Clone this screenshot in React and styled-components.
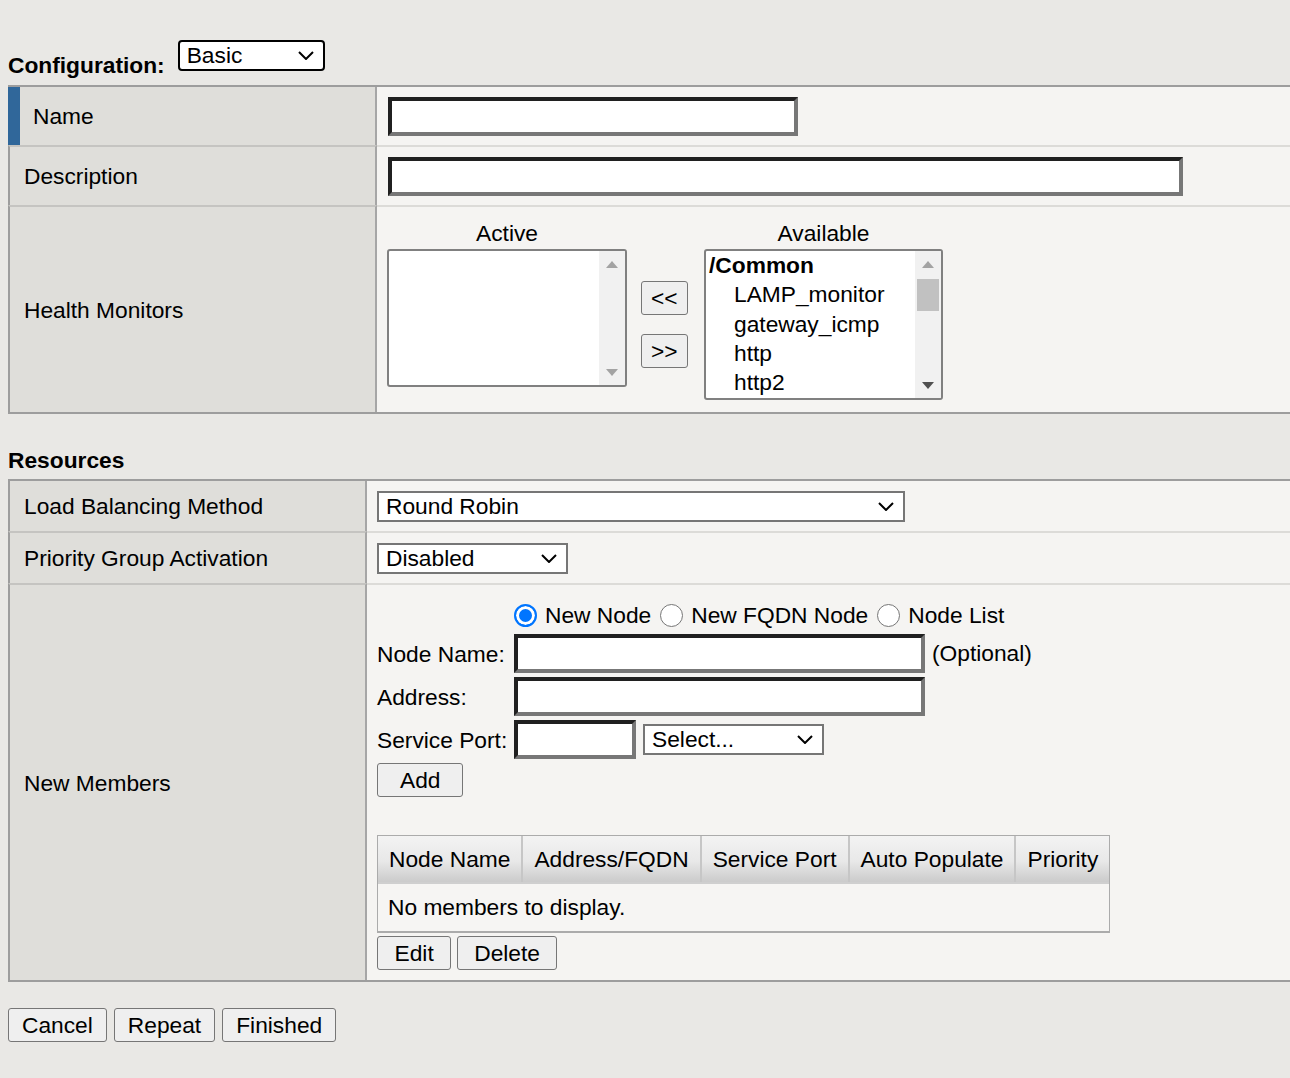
import styled, { createGlobalStyle } from "styled-components"

const GlobalStyle = createGlobalStyle`
  html, body {
    margin: 0;
    padding: 0;
  }
  body {
    background: #e9e8e5;
    font-family: "Liberation Sans", Arial, sans-serif;
    font-size: 22.75px;
    color: #000;
    overflow: hidden;
  }
  * {
    box-sizing: border-box;
  }
`

const Page = styled.div`
  width: 1290px;
  padding-left: 8px;
  overflow: hidden;
`

const ConfigBar = styled.div`
  display: flex;
  align-items: flex-start;
  gap: 13px;
  height: 45px;
  margin-top: 40px;
`

const BoldLabel = styled.div`
  font-weight: bold;
  line-height: 26px;
  padding-top: ${(p) => p.$top || 0}px;
`

const SectionTitle = styled(BoldLabel)`
  padding: 33px 0 6px;
`

const SelectBox = styled.div`
  width: ${(p) => p.$w}px;
  height: 31px;
  display: flex;
  align-items: center;
  justify-content: space-between;
  padding: 0 9px 0 7px;
  background: #fff;
  border: 2px solid ${(p) => (p.$dark ? "#000" : "#767676")};
  border-radius: ${(p) => (p.$dark ? 4 : 0)}px;
  line-height: 1;
  white-space: nowrap;
`

const LabelCell = styled.div`
  display: flex;
  align-items: center;
  background: #dfdeda;
  border-left: ${(p) => (p.$required ? "12px solid #30679a" : "2px solid #9d9d9d")};
  border-right: 2px solid #a6a6a6;
  padding-left: ${(p) => (p.$required ? 13 : 14)}px;
  line-height: 26px;
`

const ValueCell = styled.div`
  display: flex;
  flex-direction: ${(p) => (p.$column ? "column" : "row")};
  align-items: ${(p) => (p.$column || p.$top ? "flex-start" : "center")};
  background: #f5f4f2;
  padding: ${(p) => p.$pad || "0 0 0 10px"};
`

const Row = styled.div`
  display: grid;
  grid-template-columns: ${(p) => p.$label}px 1fr;
  min-height: ${(p) => p.$h || 0}px;
`

const PropTable = styled.div`
  width: calc(100% + 20px);
  border-top: 2px solid #9d9d9d;
  border-bottom: 2px solid #9d9d9d;

  & > ${Row} + ${Row} > ${LabelCell} {
    border-top: 2px solid #c5c4c1;
  }
  & > ${Row} + ${Row} > ${ValueCell} {
    border-top: 2px solid #dcdbd8;
  }
`

const Field = styled.input`
  display: block;
  width: ${(p) => p.$w}px;
  height: 39px;
  margin-left: ${(p) => p.$ml || 0}px;
  padding: 0 4px;
  border: 4px solid;
  border-color: #202020 #777 #777 #202020;
  background: #fff;
  font: inherit;
  outline: none;
`

const DualList = styled.div`
  display: grid;
  grid-template-columns: 240px 49px 239px;
  grid-template-rows: 26px auto;
  column-gap: 14px;
  row-gap: 3px;
`

const ListHeader = styled.div`
  text-align: center;
  line-height: 26px;
`

const ListBox = styled.div`
  height: ${(p) => p.$h}px;
  display: flex;
  align-self: start;
  background: #fff;
  border: 2px solid #808080;
  border-radius: 3px;
  overflow: hidden;
`

const ListItems = styled.div`
  flex: 1;
  padding: 0 3px;
  line-height: 29.3px;
  white-space: nowrap;
`

const ListItem = styled.div`
  padding-left: ${(p) => (p.$group ? 0 : 25)}px;
  font-weight: ${(p) => (p.$group ? "bold" : "normal")};
`

const ScrollTrack = styled.div`
  width: 26px;
  display: flex;
  flex-direction: column;
  background: #f1f1f1;
`

const ScrollButton = styled.div`
  height: 26px;
  display: flex;
  align-items: center;
  justify-content: center;
`

const ScrollThumb = styled.div`
  height: 32px;
  margin: 2px 2px 0;
  background: #c1c1c1;
`

const Spacer = styled.div`
  flex: 1;
`

const Mover = styled.div`
  display: flex;
  flex-direction: column;
  gap: 19px;
  align-self: center;
  justify-self: start;
`

const Button = styled.button`
  height: 34px;
  padding: 0 ${(p) => p.$px || 13}px;
  border: 1px solid #767676;
  border-radius: 3px;
  background: #efefef;
  color: #000;
  font: inherit;
  line-height: 1;
  white-space: nowrap;
`

const MemberForm = styled.div`
  display: grid;
  grid-template-columns: 135px auto;
  column-gap: 2px;
  row-gap: 4px;
  align-items: center;
  justify-content: start;
`

const FormLabel = styled.div`
  line-height: 26px;
  white-space: nowrap;
`

const RadioGroup = styled.div`
  grid-column: 2;
  display: flex;
  align-items: center;
  height: 30px;
`

const RadioOption = styled.label`
  display: inline-flex;
  align-items: center;
  gap: 8px;
  margin-right: 9px;
  line-height: 26px;
  white-space: nowrap;
`

const Radio = styled.span`
  width: 23px;
  height: 23px;
  border-radius: 50%;
  flex: none;
  background: ${(p) => (p.$on ? "#0075ff" : "#fff")};
  border: ${(p) => (p.$on ? "2px solid #0075ff" : "1.5px solid #767676")};
  box-shadow: ${(p) => (p.$on ? "inset 0 0 0 3px #fff" : "none")};
`

const InlineRow = styled.div`
  display: flex;
  align-items: center;
  gap: 7px;
`

const AddSlot = styled.div`
  grid-column: 1;
`

const MembersTable = styled.table`
  margin-top: 38px;
  border-collapse: separate;
  border-spacing: 0;
  border: solid #ababab;
  border-width: 1px 1px 2px 1px;
`

const Th = styled.th`
  height: 46px;
  padding: 0 11px;
  font-weight: normal;
  text-align: left;
  white-space: nowrap;
  background: linear-gradient(to bottom, #f3f3f3 0%, #e8e8e8 55%, #cbcbcb 100%);

  & + & {
    border-left: 2px solid #c6c6c6;
  }
`

const Td = styled.td`
  height: 49px;
  padding: 0 10px;
  border-top: 2px solid #cfcfcf;
  background: #f6f5f3;
`

const ButtonRow = styled.div`
  display: flex;
  gap: ${(p) => p.$gap || 6}px;
  margin-top: ${(p) => p.$mt || 0}px;
`

function Chevron() {
  return (
    <svg width="16" height="9" viewBox="0 0 16 9">
      <polyline points="1,1 8,8 15,1" fill="none" stroke="#000" strokeWidth="2" />
    </svg>
  )
}

function Arrow({ down, color }) {
  return (
    <svg width="12" height="7" viewBox="0 0 12 7">
      <polygon points={down ? "0,0 12,0 6,7" : "0,7 12,7 6,0"} fill={color} />
    </svg>
  )
}

function Select({ value, width, dark }) {
  return (
    <SelectBox $w={width} $dark={dark}>
      <span>{value}</span>
      <Chevron />
    </SelectBox>
  )
}

const monitors = ["LAMP_monitor", "gateway_icmp", "http", "http2"]
const columns = ["Node Name", "Address/FQDN", "Service Port", "Auto Populate", "Priority"]

export default function App() {
  return (
    <Page>
      <GlobalStyle />
      <ConfigBar>
        <BoldLabel $top={12}>Configuration:</BoldLabel>
        <Select value="Basic" width={147} dark />
      </ConfigBar>

      <PropTable>
        <Row $label={369} $h={58}>
          <LabelCell $required>Name</LabelCell>
          <ValueCell>
            <Field $w={410} $ml={1} />
          </ValueCell>
        </Row>
        <Row $label={369} $h={60}>
          <LabelCell>Description</LabelCell>
          <ValueCell>
            <Field $w={795} $ml={1} />
          </ValueCell>
        </Row>
        <Row $label={369}>
          <LabelCell>Health Monitors</LabelCell>
          <ValueCell $top $pad="13px 0 12px 10px">
            <DualList>
              <ListHeader>Active</ListHeader>
              <div />
              <ListHeader>Available</ListHeader>
              <ListBox $h={138}>
                <ListItems />
                <ScrollTrack>
                  <ScrollButton>
                    <Arrow color="#a3a3a3" />
                  </ScrollButton>
                  <Spacer />
                  <ScrollButton>
                    <Arrow down color="#a3a3a3" />
                  </ScrollButton>
                </ScrollTrack>
              </ListBox>
              <Mover>
                <Button $px={9}>&lt;&lt;</Button>
                <Button $px={9}>&gt;&gt;</Button>
              </Mover>
              <ListBox $h={151}>
                <ListItems>
                  <ListItem $group>/Common</ListItem>
                  {monitors.map((m) => (
                    <ListItem key={m}>{m}</ListItem>
                  ))}
                </ListItems>
                <ScrollTrack>
                  <ScrollButton>
                    <Arrow color="#a3a3a3" />
                  </ScrollButton>
                  <ScrollThumb />
                  <Spacer />
                  <ScrollButton>
                    <Arrow down color="#505050" />
                  </ScrollButton>
                </ScrollTrack>
              </ListBox>
            </DualList>
          </ValueCell>
        </Row>
      </PropTable>

      <SectionTitle>Resources</SectionTitle>

      <PropTable>
        <Row $label={359} $h={50}>
          <LabelCell>Load Balancing Method</LabelCell>
          <ValueCell>
            <Select value="Round Robin" width={528} />
          </ValueCell>
        </Row>
        <Row $label={359} $h={52}>
          <LabelCell>Priority Group Activation</LabelCell>
          <ValueCell>
            <Select value="Disabled" width={191} />
          </ValueCell>
        </Row>
        <Row $label={359}>
          <LabelCell>New Members</LabelCell>
          <ValueCell $column $pad="15px 0 10px 10px">
            <MemberForm>
              <RadioGroup>
                <RadioOption>
                  <Radio $on />
                  New Node
                </RadioOption>
                <RadioOption>
                  <Radio />
                  New FQDN Node
                </RadioOption>
                <RadioOption>
                  <Radio />
                  Node List
                </RadioOption>
              </RadioGroup>

              <FormLabel>Node Name:</FormLabel>
              <InlineRow>
                <Field $w={411} />
                <span>(Optional)</span>
              </InlineRow>

              <FormLabel>Address:</FormLabel>
              <Field $w={411} />

              <FormLabel>Service Port:</FormLabel>
              <InlineRow>
                <Field $w={122} />
                <Select value="Select..." width={181} />
              </InlineRow>

              <AddSlot>
                <Button $px={22}>Add</Button>
              </AddSlot>
            </MemberForm>

            <MembersTable>
              <thead>
                <tr>
                  {columns.map((c) => (
                    <Th key={c}>{c}</Th>
                  ))}
                </tr>
              </thead>
              <tbody>
                <tr>
                  <Td colSpan={5}>No members to display.</Td>
                </tr>
              </tbody>
            </MembersTable>

            <ButtonRow $mt={3}>
              <Button $px={16.5}>Edit</Button>
              <Button $px={16}>Delete</Button>
            </ButtonRow>
          </ValueCell>
        </Row>
      </PropTable>

      <ButtonRow $mt={26} $gap={7}>
        <Button>Cancel</Button>
        <Button>Repeat</Button>
        <Button>Finished</Button>
      </ButtonRow>
    </Page>
  )
}
